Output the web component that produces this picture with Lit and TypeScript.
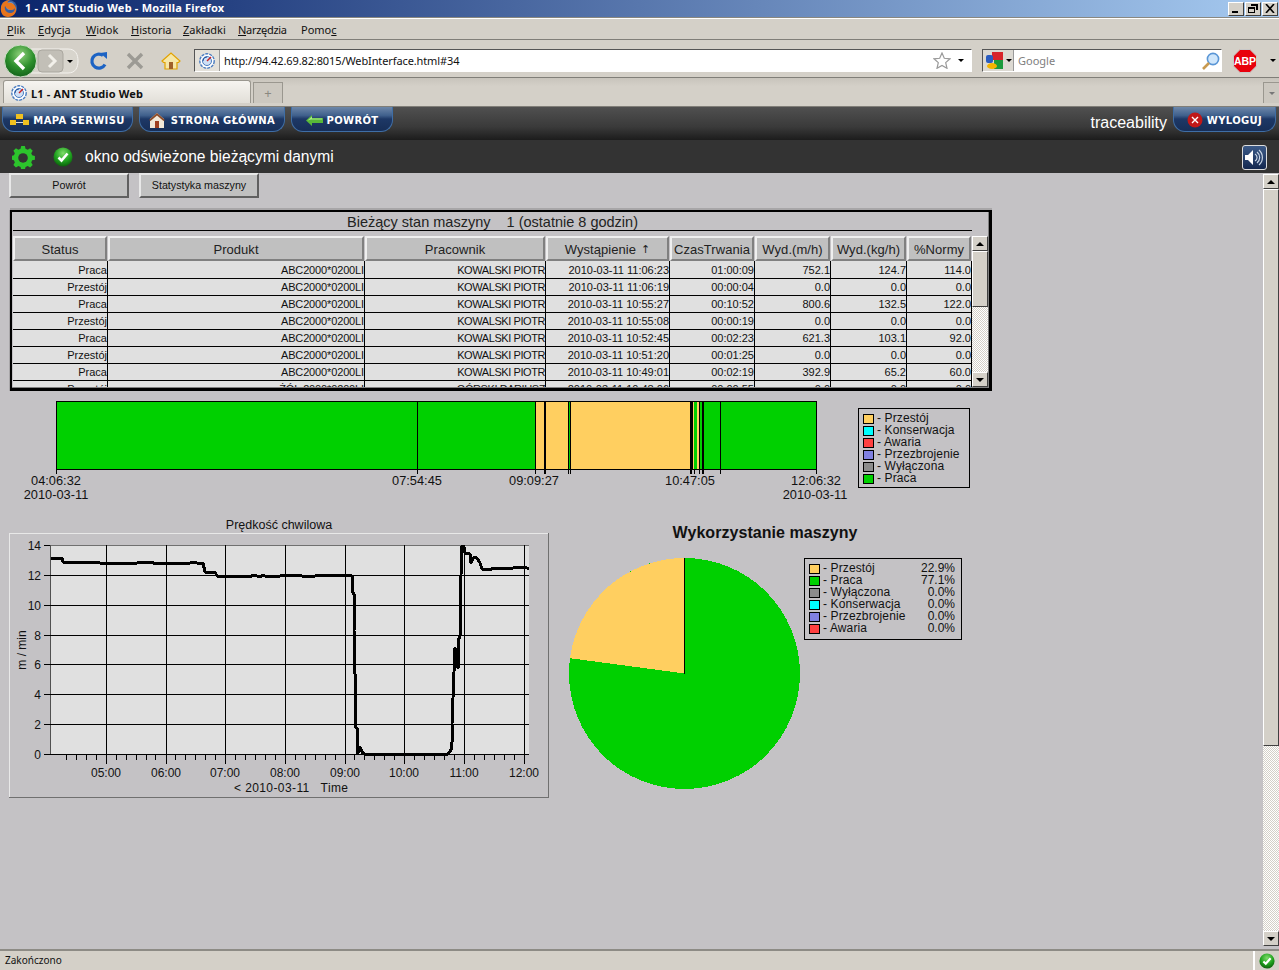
import { LitElement, html, css, svg } from "lit";
import { customElement } from "lit/decorators.js";

const ROWS = [
  ["Praca", "ABC2000*0200LI", "KOWALSKI PIOTR", "2010-03-11 11:06:23", "01:00:09", "752.1", "124.7", "114.0"],
  ["Przestój", "ABC2000*0200LI", "KOWALSKI PIOTR", "2010-03-11 11:06:19", "00:00:04", "0.0", "0.0", "0.0"],
  ["Praca", "ABC2000*0200LI", "KOWALSKI PIOTR", "2010-03-11 10:55:27", "00:10:52", "800.6", "132.5", "122.0"],
  ["Przestój", "ABC2000*0200LI", "KOWALSKI PIOTR", "2010-03-11 10:55:08", "00:00:19", "0.0", "0.0", "0.0"],
  ["Praca", "ABC2000*0200LI", "KOWALSKI PIOTR", "2010-03-11 10:52:45", "00:02:23", "621.3", "103.1", "92.0"],
  ["Przestój", "ABC2000*0200LI", "KOWALSKI PIOTR", "2010-03-11 10:51:20", "00:01:25", "0.0", "0.0", "0.0"],
  ["Praca", "ABC2000*0200LI", "KOWALSKI PIOTR", "2010-03-11 10:49:01", "00:02:19", "392.9", "65.2", "60.0"],
  ["Przestój", "ŻÓŁ 2000*0200LI", "GÓRSKI DARIUSZ", "2010-03-11 10:48:06", "00:00:55", "0.0", "0.0", "0.0"],
];
const HEAD = ["Status", "Produkt", "Pracownik", "Wystąpienie", "CzasTrwania", "Wyd.(m/h)", "Wyd.(kg/h)", "%Normy"];

const C = { orange: "#ffcf60", green: "#00d000", cyan: "#00ffff", red: "#ff4040", blue: "#8080e0", gray: "#8c8c8c" };

const LEG1: [string, string][] = [
  [C.orange, "Przestój"], [C.cyan, "Konserwacja"], [C.red, "Awaria"], [C.blue, "Przezbrojenie"], [C.gray, "Wyłączona"], [C.green, "Praca"],
];
const LEG2: [string, string, string][] = [
  [C.orange, "Przestój", "22.9%"], [C.green, "Praca", "77.1%"], [C.gray, "Wyłączona", "0.0%"],
  [C.cyan, "Konserwacja", "0.0%"], [C.blue, "Przezbrojenie", "0.0%"], [C.red, "Awaria", "0.0%"],
];

const CURVE = "51,559 53,558 62,558 63,562 67,563 70,562 100,563 102,563 128,563 132,564 137,563 152,562 153,563 182,563 183,564 190,563 194,562 197,563 203,563 205,572 215,572 217,576 252,576 253,575 257,576 262,576 263,575 265,576 280,576 298,575 302,576 310,577 315,576 323,575 350,575 352,576 353,593 354,594 354,630 355,674 355,727 357,728 357,753 359,752 360,747 362,752 364,754 448,754 451,750 452,742 452,724 453,698 454,672 455,648 456,662 457,650 458,668 459,638 460,637 461,575 462,546 464,547 465,553 470,554 471,563 474,557 477,558 480,563 482,569 492,569 493,568 513,568 515,567 522,568 525,567 529,569";

const ICON_FIREFOX = svg`<svg width="18" height="17" viewBox="0 0 18 17"><circle cx="9" cy="8" r="8" fill="#3b5f9e"/><circle cx="10" cy="6" r="4" fill="#6f94c9"/><path d="M1 7C2 2 6 0 10 0c-2 1-3 2-2 3 3-1 7 1 8 5 1 5-3 9-8 9-5 0-8-4-7-10z M5 6c-1 3 1 7 5 7 3 0 5-2 5-5-1 2-3 2-5 2-2-1-4-2-5-4z" fill="#e8741c"/></svg>`;
const ICON_FAV = svg`<svg width="16" height="16" viewBox="0 0 16 16"><circle cx="8" cy="8" r="7.2" fill="#fff" stroke="#4a7cc0" stroke-width="1.4" stroke-dasharray="3 1"/><circle cx="8" cy="8" r="4.5" fill="#cfe0f5" stroke="#4a7cc0"/><path d="M8 8l4-4" stroke="#d02020" stroke-width="1.4"/><path d="M4 8a4 4 0 0 1 4-4" fill="none" stroke="#2c5aa0"/></svg>`;

@customElement("app-root")
export class AppRoot extends LitElement {
  static styles = css`
    :host { display: block; width: 1279px; height: 970px; overflow: hidden; background: #c4c2c5; font-family: "Liberation Sans", Arial, sans-serif; color: #000; }
    .win { display: flex; flex-direction: column; height: 970px; }
    svg { display: block; flex: none; }
    .ui { font-family: "Noto Sans", "DejaVu Sans", sans-serif; font-size: 11px; }

    .title { height: 17px; flex: none; display: flex; align-items: center; background: linear-gradient(90deg, #0a246a, #a6caf0); color: #fff; font-weight: 700; padding-left: 0; border-bottom: 1px solid #8a8880; }
    .title-text { margin: 0 0 2px 7px; flex: 1; letter-spacing: 0.2px; }
    .wbtns { display: flex; gap: 0; padding-right: 1px; }
    .wbtn { width: 16px; height: 14px; margin-left: 1px; box-sizing: border-box; background: #d4d0c8; border: 1px solid; border-color: #fff #404040 #404040 #fff; display: flex; align-items: center; justify-content: center; }
    .menu { height: 22px; flex: none; display: flex; align-items: center; background: #d4d0c8; border-top: 1px solid #fff; box-sizing: border-box; padding-left: 7px; border-bottom: 1px solid #807e78; color: #111; }
    .menu span { display: block; }
    .m1 { width: 31px; } .m2 { width: 48px; } .m3 { width: 45px; } .m4 { width: 52px; } .m5 { width: 55px; } .m6 { width: 63px; letter-spacing: -0.3px; }

    .nav { height: 38px; flex: none; display: flex; align-items: center; background: #d4d0c8; box-sizing: border-box; border-bottom: 1px solid #807e78; padding-top: 4px; }
    .back { margin-left: 2px; width: 78px; flex: none; }
    .nbtn { width: 36px; flex: none; display: flex; justify-content: center; }
    .r1 { margin-left: 1px; }
    .url { margin-left: 5px; width: 778px; height: 23px; box-sizing: border-box; display: flex; align-items: center; background: #fff; border: 1px solid; border-color: #555 #fff #fff #555; flex: none; }
    .fav { width: 24px; height: 21px; background: #e4e1da; border-right: 1px solid #999; display: flex; align-items: center; justify-content: center; flex: none; }
    .url-text { margin-left: 4px; flex: 1; color: #111; letter-spacing: -0.11px; }
    .url-star { margin-right: 7px; }
    .caret { width: 0; height: 0; border: 3px solid transparent; border-top: 3px solid #000; border-bottom: 0; flex: none; }
    .url-caret { margin-right: 7px; }
    .search { margin-left: 10px; width: 240px; height: 23px; box-sizing: border-box; display: flex; align-items: center; background: #fff; border: 1px solid; border-color: #555 #fff #fff #555; flex: none; }
    .sprov { width: 31px; height: 21px; background: #dcd9d2; border-right: 1px solid #999; display: flex; align-items: center; gap: 3px; padding-left: 3px; box-sizing: border-box; flex: none; }
    .stext { margin-left: 4px; flex: 1; color: #808080; }
    .abp { margin-left: 11px; }
    .abp-text { font: 700 10.5px "Liberation Sans", sans-serif; fill: #fff; }
    .nav-end { margin-left: 13px; }

    .tabs { height: 29px; flex: none; box-sizing: border-box; background: linear-gradient(#c8c4bc, #d4d0c8 30%); display: flex; align-items: flex-end; padding: 0 0 3px 3px; border-bottom: 1px solid #807e78; }
    .tab { width: 248px; height: 23px; box-sizing: border-box; background: linear-gradient(#f6f4f0, #e2dfd8); border: 1px solid #9a978f; border-bottom: 0; border-radius: 3px 3px 0 0; display: flex; align-items: center; padding: 2px 0 0 7px; gap: 4px; font-weight: 700; color: #111; letter-spacing: 0.15px; }
    .tab-new { margin-left: 2px; width: 30px; height: 21px; box-sizing: border-box; border: 1px solid #9a978f; border-bottom: 0; background: #ccc8c0; color: #8a8880; display: flex; align-items: center; justify-content: center; font-size: 13px; }
    .tab-fill { flex: 1; }
    .tab-list { width: 16px; height: 21px; box-sizing: border-box; border: 1px solid #9a978f; border-right: 0; border-bottom: 0; background: #ccc8c0; display: flex; align-items: center; justify-content: center; }
    .tab-list .caret { border-top-color: #777; }

    .apphead { height: 33px; flex: none; box-sizing: border-box; background: linear-gradient(#505050, #3a3a3a 60%, #1c1c1c); display: flex; align-items: flex-start; padding-left: 2px; }
    .abtn { height: 25px; box-sizing: border-box; padding-top: 2px; display: flex; align-items: center; justify-content: center; gap: 4px; border: 1px solid #3f6ea6; border-top: 0; border-radius: 0 0 12px 12px; background: linear-gradient(#6d87a9, #40608c 35%, #1d3866 50%, #172e57); color: #fff; font: 700 10px "DejaVu Sans", sans-serif; letter-spacing: 0.35px; margin-right: 6px; }
    .b1 { width: 131px; } .b2 { width: 146px; } .b3 { width: 102px; } .b4 { width: 103px; margin-right: 3px; }
    .sg { margin-left: 2px; }
    .head-fill { flex: 1; }
    .trace { color: #fff; font-size: 16px; margin: 6px 6px 0 0; line-height: 19px; }

    .statusline { height: 33px; flex: none; box-sizing: border-box; background: #333; display: flex; align-items: center; padding: 1px 0 0 12px; color: #fff; font-size: 15.6px; }
    .st-check { margin-left: 18px; }
    .st-text { margin-left: 12px; flex: 1; }
    .speaker { margin-right: 12px; width: 25px; height: 25px; box-sizing: border-box; border: 1px solid #ddd; border-radius: 3px; background: linear-gradient(#3c5a88, #14284f); display: flex; align-items: center; justify-content: center; }

    .body { flex: 1; min-height: 0; display: flex; }
    .page { flex: 1; min-width: 0; display: flex; flex-direction: column; }
    .vs { width: 16px; flex: none; display: flex; flex-direction: column; }
    .main-vs { margin: 1px 0 3px; }
    .sbb { height: 15px; flex: none; box-sizing: border-box; background: #d4d0c8; border: 1px solid; border-color: #fff #404040 #404040 #fff; display: flex; align-items: center; justify-content: center; }
    .up { width: 0; height: 0; border: 4px solid transparent; border-bottom: 4px solid #000; border-top: 0; }
    .dn { width: 0; height: 0; border: 4px solid transparent; border-top: 4px solid #000; border-bottom: 0; }
    .thumb { flex: none; box-sizing: border-box; background: #d4d0c8; border: 1px solid; border-color: #fff #404040 #404040 #fff; }
    .thumb-main { height: 557px; }
    .thumb-tbl { height: 56px; }
    .track { flex: 1; background: repeating-conic-gradient(#d4d0c8 0 25%, #fff 0 50%) 0 0 / 2px 2px; }

    .btns { display: flex; gap: 10px; padding-left: 9px; height: 25px; flex: none; }
    .jb { width: 120px; height: 25px; box-sizing: border-box; background: #c0c0c0; border: 2px solid; border-color: #e8e8e8 #606060 #606060 #e8e8e8; padding-bottom: 2px; display: flex; align-items: center; justify-content: center; font-size: 10.7px; color: #111; }

    .frame { margin: 12px 0 0 10px; width: 982px; height: 181px; box-sizing: border-box; flex: none; border: 2px solid #000; border-width: 2px 3px 3px 2px; box-shadow: 0 -2px 0 #a8a6a8, -1px 0 0 #a8a6a8, inset -1px -1px 0 #808080; padding-left: 1px; display: flex; flex-direction: column; overflow: hidden; }
    .ftitle { height: 18px; width: 959px; flex: none; box-sizing: content-box; border-bottom: 1px solid #000; text-align: center; font-size: 14.5px; line-height: 21px; white-space: pre; color: #222; overflow: hidden; }
    .fbody { margin-top: 5px; display: flex; height: 151px; flex: none; }
    .tbl { width: 959px; flex: none; display: flex; flex-direction: column; }
    .grow { display: grid; grid-template-columns: 95px 257px 181px 124px 85px 76px 76px 65px; }
    .hd { height: 25px; flex: none; }
    .hc { box-sizing: border-box; background: #c0c0c0; border: 2px solid; border-color: #efefef #808080 #808080 #efefef; margin-right: 1px; display: flex; align-items: center; justify-content: center; font-size: 13px; color: #222; padding-top: 2px; white-space: pre; letter-spacing: 0.05px; }
    .arrow { font-family: "DejaVu Sans", sans-serif; font-size: 11px; margin-left: 5px; }
    .rows { flex: 1; background: #e0e0e0; overflow: hidden; padding-top: 1px; min-height: 0; }
    .r { height: 17px; box-sizing: border-box; border-bottom: 1px solid #000; }
    .c { border-right: 1px solid #000; box-sizing: border-box; text-align: right; padding-right: 0; font-size: 11px; line-height: 18px; white-space: nowrap; color: #111; margin-top: -1px; height: 17px; overflow: hidden; }
    .c:nth-child(2) { letter-spacing: -0.14px; }
    .c:nth-child(3) { letter-spacing: -0.42px; }

    .tline { display: flex; flex: none; height: 119px; }
    .svgt { font-family: "Liberation Sans", Arial, sans-serif; font-size: 12px; fill: #111; }
    .svgtt { font-size: 12.8px; }
    .sp { letter-spacing: 0.4px; white-space: pre; }
    .pt { font-size: 12.5px; }
    .crisp { shape-rendering: crispEdges; }
    .legend { border: 1px solid #000; box-sizing: border-box; flex: none; font-size: 12px; color: #111; padding-top: 3px; }
    .l1 { width: 112px; height: 80px; margin-top: 17px; }
    .l2 { width: 158px; height: 82px; }
    .lr { display: flex; align-items: center; height: 12px; padding-left: 4px; }
    .sw { width: 11px; height: 10px; box-sizing: border-box; border: 1px solid #000; flex: none; margin: 2px 3px 0 0; }
    .ln { flex: 1; white-space: pre; letter-spacing: 0.12px; }
    .lv { padding-right: 6px; }

    .charts { display: flex; flex: none; height: 290px; }
    .piecol { width: 410px; flex: none; display: flex; flex-direction: column; }
    .ptitle { margin-top: 14px; height: 18px; line-height: 18px; text-align: center; font-weight: 700; font-size: 16px; color: #111; flex: none; letter-spacing: 0.05px; }
    .pierow { margin-top: 16px; display: flex; align-items: flex-start; }

    .sbar { height: 21px; flex: none; box-sizing: border-box; background: #d4d0c8; border-top: 2px solid #8d8b85; display: flex; align-items: center; color: #111; }
    .sbar-t { flex: 1; padding: 0 0 2px 5px; font-size: 10px; }
    .sbar-i { width: 26px; height: 19px; box-sizing: border-box; border-left: 2px solid #fff; display: flex; align-items: center; justify-content: center; }
  `;

  private check(size: number) {
    return svg`<svg width="${size}" height="${size}" viewBox="0 0 20 20"><defs><radialGradient id="gc${size}" cx="50%" cy="30%" r="70%"><stop offset="0" stop-color="#7fdc6a"/><stop offset=".6" stop-color="#1ea01e"/><stop offset="1" stop-color="#0c5f0c"/></radialGradient></defs><circle cx="10" cy="10" r="9.5" fill="url(#gc${size})"/><path d="M5.5 10.5l3 3 6-7" fill="none" stroke="#fff" stroke-width="2.6"/></svg>`;
  }

  private legend1() {
    return html`<div class="legend l1">${LEG1.map(([c, n]) => html`<div class="lr"><i class="sw" style="background:${c}"></i><span class="ln">- ${n}</span></div>`)}</div>`;
  }
  private legend2() {
    return html`<div class="legend l2">${LEG2.map(([c, n, v]) => html`<div class="lr"><i class="sw" style="background:${c}"></i><span class="ln">- ${n}</span><span class="lv">${v}</span></div>`)}</div>`;
  }

  private timeline() {
    const segs: [number, number, string][] = [
      [56, 535, C.green], [535, 690, C.orange], [568, 571, C.green], [692, 694, C.orange], [694, 697, C.green], [697, 700, C.orange], [700, 720, C.green], [720, 816, C.green],
    ];
    const lines = [417, 535, 544, 545, 568, 570, 690, 691, 692, 699, 702, 703, 720];
    const ticks = [56, 417, 535, 544, 545, 568, 570, 690, 691, 694, 699, 702, 703, 720, 816];
    const labels: [number, number, string][] = [
      [56, 484, "04:06:32"], [56, 498, "2010-03-11"], [417, 484, "07:54:45"], [534, 484, "09:09:27"], [690, 484, "10:47:05"], [816, 484, "12:06:32"], [815, 498, "2010-03-11"],
    ];
    return svg`<svg width="858" height="119" viewBox="0 391 858 119">
      <g class="crisp">
        ${segs.map(([a, b, c]) => svg`<rect x="${a}" y="401" width="${b - a}" height="68" fill="${c}"/>`)}
        ${lines.map((x) => svg`<rect x="${x}" y="401" width="1" height="68" fill="#000"/>`)}
        ${ticks.map((x) => svg`<rect x="${x}" y="469" width="1" height="5" fill="#000"/>`)}
        <rect x="56" y="401" width="761" height="1" fill="#000"/><rect x="56" y="469" width="761" height="1" fill="#000"/>
        <rect x="56" y="401" width="1" height="69" fill="#000"/><rect x="816" y="401" width="1" height="69" fill="#000"/>
      </g>
      ${labels.map(([x, y, t]) => svg`<text class="svgt svgtt" x="${x}" y="${y + 1}" text-anchor="middle">${t}</text>`)}
    </svg>`;
  }

  private lineChart() {
    const ys: [number, string][] = [[545, "14"], [575, "12"], [605, "10"], [635, "8"], [664, "6"], [694, "4"], [724, "2"], [754, "0"]];
    const xs: [number, string][] = [[106, "05:00"], [166, "06:00"], [225, "07:00"], [285, "08:00"], [345, "09:00"], [404, "10:00"], [464, "11:00"], [524, "12:00"]];
    const minors: number[] = [];
    for (let h = 0; h < 8; h++) for (let m = 1; m < 6; m++) minors.push(Math.round(46 + h * 59.7 + m * 9.95));
    minors.splice(0, 1);
    return svg`<svg width="560" height="290" viewBox="0 510 560 290">
      <text class="svgt pt" x="279" y="529" text-anchor="middle">Prędkość chwilowa</text>
      <g class="crisp">
        <rect x="10" y="533" width="539" height="265" fill="#c4c2c5"/>
        <rect x="9" y="533" width="540" height="1" fill="#e8e8e8"/><rect x="9" y="533" width="1" height="265" fill="#e8e8e8"/>
        <rect x="9" y="797" width="540" height="1" fill="#707070"/><rect x="548" y="533" width="1" height="265" fill="#707070"/>
        <rect x="50" y="545" width="479" height="210" fill="#e0e0e0"/>
        <rect x="50" y="545" width="479" height="1" fill="#707070"/>
        <rect x="50" y="545" width="1" height="210" fill="#505050"/>
        ${ys.slice(1).map(([y]) => svg`<rect x="50" y="${y}" width="479" height="1" fill="#000"/>`)}
        ${ys.map(([y]) => svg`<rect x="44" y="${y}" width="6" height="1" fill="#000"/>`)}
        ${xs.map(([x]) => svg`<rect x="${x}" y="545" width="1" height="219" fill="#000"/>`)}
        ${minors.map((x) => svg`<rect x="${x}" y="755" width="1" height="5" fill="#000"/>`)}
        <polyline points="${CURVE}" fill="none" stroke="#000" stroke-width="3" stroke-linejoin="round"/>
      </g>
      ${ys.map(([y, t]) => svg`<text class="svgt" x="41" y="${y + 5}" text-anchor="end">${t}</text>`)}
      ${xs.map(([x, t]) => svg`<text class="svgt" x="${x}" y="777" text-anchor="middle">${t}</text>`)}
      <text class="svgt sp" x="234" y="792">&lt; 2010-03-11   Time</text>
      <text class="svgt" transform="translate(26,650) rotate(-90)" text-anchor="middle">m / min</text>
    </svg>`;
  }

  private pie() {
    return svg`<svg width="244" height="240" viewBox="560 558 244 240">
      <g class="crisp">
        <circle cx="684.5" cy="673.5" r="115.5" fill="${C.green}"/>
        <path d="M684.5 673.5 L684.5 558 A115.5 115.5 0 0 0 570 658.2 Z" fill="${C.orange}"/>
        <rect x="684" y="558" width="1" height="116" fill="#000"/>
      </g>
    </svg>`;
  }

  private sb(thumbCls: string) {
    return html`<div class="sbb"><i class="up"></i></div><div class="thumb ${thumbCls}"></div><div class="track"></div><div class="sbb"><i class="dn"></i></div>`;
  }

  render() {
    return html`<div class="win">
      <div class="title ui">
        ${ICON_FIREFOX}
        <div class="title-text">1 - ANT Studio Web - Mozilla Firefox</div>
        <div class="wbtns">
          <div class="wbtn"><svg width="10" height="9" viewBox="0 0 10 9"><rect x="1" y="7" width="6" height="2"/></svg></div>
          <div class="wbtn"><svg width="10" height="9" viewBox="0 0 10 9"><path d="M3 0h7v6H8V2H3zM0 3h7v6H0zM1 5v3h5V5z" fill-rule="evenodd"/></svg></div>
          <div class="wbtn"><svg width="10" height="9" viewBox="0 0 10 9"><path d="M1 0l8 9M9 0l-8 9" stroke="#000" stroke-width="1.6"/></svg></div>
        </div>
      </div>
      <div class="menu ui">
        <span class="m1"><u>P</u>lik</span><span class="m2"><u>E</u>dycja</span><span class="m3"><u>W</u>idok</span><span class="m4"><u>H</u>istoria</span><span class="m5"><u>Z</u>akładki</span><span class="m6"><u>N</u>arzędzia</span><span>Pomo<u>c</u></span>
      </div>
      <div class="nav ui">
        <div class="back">
          <svg width="78" height="36" viewBox="0 0 78 36">
            <defs><radialGradient id="gb" cx="50%" cy="30%" r="75%"><stop offset="0" stop-color="#8fd07a"/><stop offset=".55" stop-color="#2c8f2c"/><stop offset="1" stop-color="#0f5c18"/></radialGradient></defs>
            <path d="M16 6h50c8 0 10 6 10 12s-2 12-10 12H16z" fill="#d8d5cd" stroke="#f4f2ee"/>
            <rect x="36" y="7" width="25" height="22" rx="4" fill="#c2bfb7" stroke="#aaa79f"/>
            <path d="M47 12l6 6-6 6" fill="none" stroke="#f2f0ea" stroke-width="3"/>
            <path d="M65 17l6 0-3 3z" fill="#000"/>
            <circle cx="18.5" cy="18" r="16" fill="url(#gb)" stroke="#cfe0c8"/>
            <path d="M22 10l-8 8 8 8" fill="none" stroke="#fff" stroke-width="3.4"/>
          </svg>
        </div>
        <div class="nbtn r1">
          <svg width="20" height="20" viewBox="0 0 20 20"><path d="M16 13.5A7 7 0 1 1 14 4.5" fill="none" stroke="#1c63c4" stroke-width="3.2"/><path d="M11 2l7-1v7z" fill="#1c63c4"/></svg>
        </div>
        <div class="nbtn">
          <svg width="20" height="20" viewBox="0 0 20 20"><path d="M3 3l14 14M17 3L3 17" stroke="#9c9a94" stroke-width="3.4"/></svg>
        </div>
        <div class="nbtn">
          <svg width="20" height="20" viewBox="0 0 20 20"><path d="M1 10L10 2l9 8-1.5 1.5H16V18H4v-6.5H2.500z" fill="#f6e7a8" stroke="#e2a200" stroke-width="1.2"/><rect x="8" y="11" width="4" height="7" fill="#a0602a"/></svg>
        </div>
        <div class="url">
          <div class="fav">${ICON_FAV}</div>
          <div class="url-text">http://94.42.69.82:8015/WebInterface.html#34</div>
          <svg class="url-star" width="18" height="17" viewBox="0 0 18 17"><path d="M9 1l2.300 5.300 5.700.5-4.300 3.800 1.300 5.700L9 13.400l-5 2.900 1.300-5.700L1 6.800l5.700-.5z" fill="#fff" stroke="#9a9a9a" stroke-width="1.2"/></svg>
          <i class="caret url-caret"></i>
        </div>
        <div class="search">
          <div class="sprov">
            <svg width="17" height="17" viewBox="0 0 17 17"><rect x="6" y="0" width="11" height="8" fill="#d8232a"/><rect x="8" y="8" width="9" height="9" fill="#1a9a3c"/><rect x="0" y="3" width="7" height="8" rx="2" fill="#2a5cc0"/><ellipse cx="6" cy="14" rx="5" ry="3" fill="#f4b400"/></svg>
            <i class="caret"></i>
          </div>
          <div class="stext">Google</div>
          <svg width="20" height="20" viewBox="0 0 20 20"><circle cx="12" cy="8" r="5.600" fill="#cfe6fb" stroke="#5a96d6" stroke-width="1.6"/><path d="M8 12l-6 6" stroke="#c89a50" stroke-width="2.600"/></svg>
        </div>
        <svg class="abp" width="24" height="24" viewBox="0 0 24 24"><path d="M7 0.500h10L23.500 7v10L17 23.500H7L0.500 17V7z" fill="#e8000c" stroke="#c8c8c8"/><text class="abp-text" x="12" y="16" text-anchor="middle">ABP</text></svg>
        <i class="caret nav-end"></i>
      </div>
      <div class="tabs ui">
        <div class="tab">${ICON_FAV}<span>L1 - ANT Studio Web</span></div>
        <div class="tab-new">+</div>
        <div class="tab-fill"></div>
        <div class="tab-list"><i class="caret"></i></div>
      </div>
      <div class="apphead">
        <div class="abtn b1">
          <svg width="19" height="12" viewBox="0 0 19 12"><rect x="6" y="0" width="7" height="5" fill="#f0c020"/><rect x="0" y="6" width="6" height="5" fill="#f0c020"/><rect x="13" y="6" width="6" height="5" fill="#f0c020"/><rect x="6" y="8" width="7" height="1" fill="#ddd"/></svg>
          MAPA SERWISU
        </div>
        <div class="abtn b2">
          <svg width="16" height="15" viewBox="0 0 16 15"><path d="M8 0L1 6v9h14V6z" fill="#f2e8d8"/><path d="M8 0L0 7l1.500 1L8 2.500 14.500 8 16 7z" fill="#8a4a28"/><rect x="6" y="8" width="4" height="7" fill="#a04020"/></svg>
          <span class="sg">STRONA GŁÓWNA</span>
        </div>
        <div class="abtn b3">
          <svg width="17" height="11" viewBox="0 0 17 11"><path d="M0 5.500L6 0v3h11v5H6v3z" fill="#58b838"/><path d="M1.500 5.500L6 1.500V3.500h10v1H5z" fill="#a8e888"/></svg>
          POWRÓT
        </div>
        <div class="head-fill"></div>
        <div class="trace">traceability</div>
        <div class="abtn b4">
          <svg width="16" height="16" viewBox="0 0 16 16"><circle cx="8" cy="8" r="7.500" fill="#c01818"/><path d="M5 5l6 6M11 5l-6 6" stroke="#fff" stroke-width="1.400"/></svg>
          WYLOGUJ
        </div>
      </div>
      <div class="statusline">
        <svg width="23" height="23" viewBox="0 0 24 24"><path fill="#2cc42c" fill-rule="evenodd" d="M10 1h4l.7 3 2.400 1 2.600-1.600 2.800 2.800L20.900 8.800l1 2.400 3 .7v4l-3 .7-1 2.400 1.600 2.600-2.800 2.800-2.600-1.600-2.400 1-.7 3h-4l-.7-3-2.400-1-2.600 1.600-2.800-2.800 1.600-2.600-1-2.400-3-.7v-4l3-.7 1-2.400L1.500 6.200 4.300 3.400 6.900 5l2.400-1z" transform="translate(0 -1) scale(.96)"/><circle cx="11.500" cy="12.500" r="5" fill="#333"/></svg>
        <div class="st-check">${this.check(20)}</div>
        <div class="st-text">okno odświeżone bieżącymi danymi</div>
        <div class="speaker">
          <svg width="19" height="17" viewBox="0 0 19 17"><path d="M0 6h3l5-5v15l-5-5H0z" fill="#fff"/><path d="M10 5a4 4 0 0 1 0 7M12 3a7 7 0 0 1 0 11M14 1a10 10 0 0 1 0 15" fill="none" stroke="#c8d4e4" stroke-width="1.200"/></svg>
        </div>
      </div>
      <div class="body">
        <div class="page">
          <div class="btns"><div class="jb">Powrót</div><div class="jb">Statystyka maszyny</div></div>
          <div class="frame">
            <div class="ftitle">Bieżący stan maszyny    1 (ostatnie 8 godzin)</div>
            <div class="fbody">
              <div class="tbl">
                <div class="grow hd">${HEAD.map((h, i) => html`<div class="hc">${h}${i === 3 ? html`<span class="arrow">↑</span>` : ""}</div>`)}</div>
                <div class="rows">
                  ${ROWS.map((r) => html`<div class="grow r">${r.map((c) => html`<div class="c">${c}</div>`)}</div>`)}
                </div>
              </div>
              <div class="vs">${this.sb("thumb-tbl")}</div>
            </div>
          </div>
          <div class="tline">${this.timeline()}${this.legend1()}</div>
          <div class="charts">
            ${this.lineChart()}
            <div class="piecol">
              <div class="ptitle">Wykorzystanie maszyny</div>
              <div class="pierow">${this.pie()}${this.legend2()}</div>
            </div>
          </div>
        </div>
        <div class="vs main-vs">${this.sb("thumb-main")}</div>
      </div>
      <div class="sbar ui">
        <div class="sbar-t">Zakończono</div>
        <div class="sbar-i">${this.check(16)}</div>
      </div>
    </div>`;
  }
}
